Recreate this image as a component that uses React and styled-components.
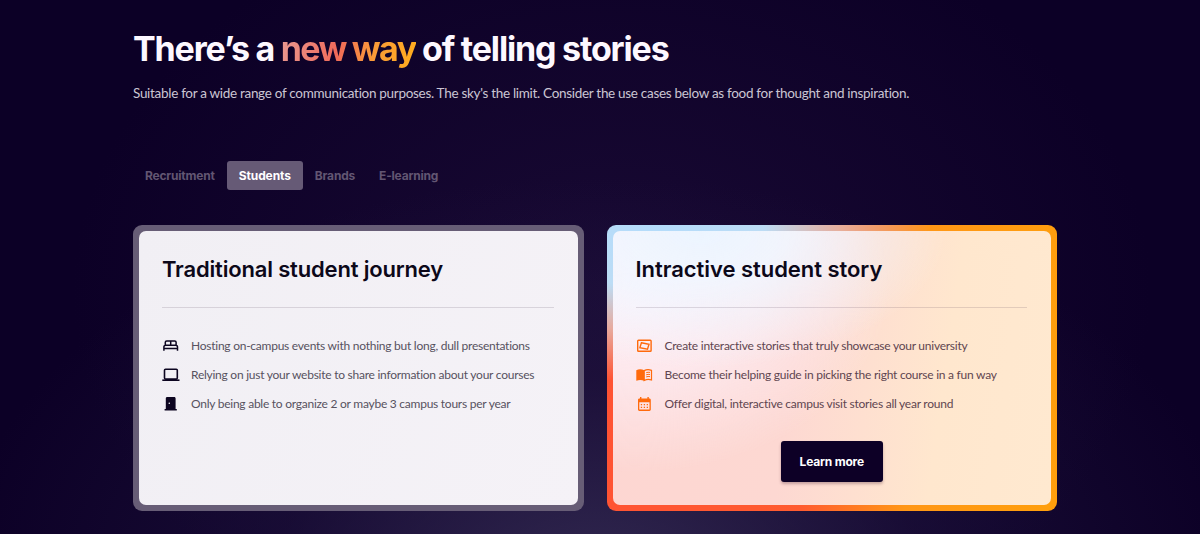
import { useState } from 'react';
import styled, { createGlobalStyle } from 'styled-components';

const tabs = ['Recruitment', 'Students', 'Brands', 'E-learning'];

const BedIcon = () => (
  <svg width="18" height="18" viewBox="0 0 18 18" fill="none" stroke="currentColor" strokeWidth="1.5">
    <path d="M3.3 8.5V5.3c0-.8.6-1.4 1.4-1.4h8c.8 0 1.4.6 1.4 1.4v3.2M8.7 4v4.3M1.9 13.7v-3.6c0-1 .8-1.8 1.8-1.8h10c1 0 1.8.8 1.8 1.8v3.6M2 11.6h13.4" />
  </svg>
);

const LaptopIcon = () => (
  <svg width="18" height="18" viewBox="0 0 18 18" fill="none" stroke="currentColor" strokeWidth="1.6">
    <rect x="2.5" y="3.3" width="12.8" height="9.8" rx="1" />
    <path d="M.3 14.2h17.2" />
  </svg>
);

const DoorIcon = () => (
  <svg width="18" height="18" viewBox="0 0 18 18" fill="currentColor">
    <path fillRule="evenodd" d="M5.2 2h7c.8 0 1.4.6 1.4 1.4v10.7h1.2v1.4H2.6v-1.4h1.2V3.4C3.800 2.600 4.400 2 5.200 2zm1.3 6.300a.8.8 0 1 0 1.600 0 .8.8 0 0 0-1.600 0z" />
  </svg>
);

const PhotosIcon = () => (
  <svg width="18" height="18" viewBox="0 0 18 18" fill="none" stroke="currentColor" strokeWidth="1.4">
    <rect x="1.7" y="3.3" width="13.4" height="11" rx=".8" />
    <path d="M5.4 5.7l7.600 1.500-1.500 4.900-7.600-1.500z" />
  </svg>
);

const BookIcon = () => (
  <svg width="18" height="18" viewBox="0 0 18 18">
    <path d="M.3 4.2C2.8 2.9 5.8 3 8.2 4.3v10.5C5.8 13.7 3 13.6.3 14.7z" fill="currentColor" />
    <path d="M8.2 4.6c2.3-1.1 4.8-1.2 7.3-.2v9.6c-2.5-.9-5-.7-7.3.5z" fill="none" stroke="currentColor" strokeWidth="1.2" />
    <path d="M10.2 6.7c1.3-.5 2.5-.6 3.8-.3M10.2 8.8c1.3-.5 2.5-.6 3.8-.3M10.2 10.9c1.3-.5 2.5-.6 3.8-.3" fill="none" stroke="currentColor" />
  </svg>
);

const CalendarIcon = () => (
  <svg width="18" height="18" viewBox="0 0 18 18" fill="currentColor">
    <path fillRule="evenodd" d="M4 2h1.4v1.5h6V2h1.4v1.5h.6c.8 0 1.4.6 1.4 1.4v9.6c0 .8-.6 1.4-1.4 1.4H3.4c-.8 0-1.4-.6-1.4-1.4V4.9c0-.8.6-1.4 1.4-1.4H4zM3.3 7.2v7.4h10.2V7.2z" />
    <path d="M4.8 9h1.3v1.2H4.8zM7.75 9h1.3v1.2h-1.3zM10.7 9H12v1.2h-1.3zM4.8 11.8h1.3V13H4.8zM7.75 11.8h1.3V13h-1.3zM10.7 11.8H12V13h-1.3z" />
  </svg>
);

const traditional = [
  { icon: <BedIcon />, text: 'Hosting on-campus events with nothing but long, dull presentations' },
  { icon: <LaptopIcon />, text: 'Relying on just your website to share information about your courses' },
  { icon: <DoorIcon />, text: 'Only being able to organize 2 or maybe 3 campus tours per year' },
];

const interactive = [
  { icon: <PhotosIcon />, text: 'Create interactive stories that truly showcase your university' },
  { icon: <BookIcon />, text: 'Become their helping guide in picking the right course in a fun way' },
  { icon: <CalendarIcon />, text: 'Offer digital, interactive campus visit stories all year round' },
];

const App = () => {
  const [active, setActive] = useState('Students');

  return (
    <Page>
      <GlobalStyle />
      <Container>
        <Title>
          There’s a <Highlight>new way</Highlight> of telling stories
        </Title>
        <Intro>
          Suitable for a wide range of communication purposes. The sky's the limit. Consider the use cases below as food for thought and inspiration.
        </Intro>
        <Tabs>
          {tabs.map((tab) => (
            <Tab key={tab} $active={tab === active} onClick={() => setActive(tab)}>
              {tab}
            </Tab>
          ))}
        </Tabs>
        <Cards>
          <Card>
            <CardBody>
              <CardTitle $spacing="-0.17px">Traditional student journey</CardTitle>
              <List>
                {traditional.map(({ icon, text }) => (
                  <Item key={text}>{icon}<ItemText>{text}</ItemText></Item>
                ))}
              </List>
            </CardBody>
          </Card>
          <Card $colorful>
            <CardBody $colorful>
              <CardTitle $spacing="-0.04px">Intractive student story</CardTitle>
              <List $colorful>
                {interactive.map(({ icon, text }) => (
                  <Item key={text} $colorful>{icon}<ItemText>{text}</ItemText></Item>
                ))}
              </List>
              <Button>Learn more</Button>
            </CardBody>
          </Card>
        </Cards>
      </Container>
    </Page>
  );
}

const GlobalStyle = createGlobalStyle`
  * {
    box-sizing: border-box;
  }
  body {
    margin: 0;
    background: #0c0028;
  }
`;
const Page = styled.main`
  height: 534px;
  overflow: hidden;
  font-family: Lato, sans-serif;
  background:
    radial-gradient(ellipse 640px 400px at 50% 108%, rgba(56, 48, 88, 0.8), rgba(36, 25, 68, 0.45) 50%, transparent),
    radial-gradient(ellipse 540px 400px at 51% 55%, #190a34, transparent),
    #0c0026;
`;
const Container = styled.div`
  width: 924px;
  margin-left: 133px;
  padding-top: 26px;
`;
const Title = styled.h1`
  margin: 0;
  height: 44px;
  font-family: Inter, sans-serif;
  font-size: 34px;
  line-height: 45px;
  font-weight: 700;
  letter-spacing: -1.15px;
  word-spacing: -0.3px;
  white-space: nowrap;
  color: #fdf8ff;
`;
const Highlight = styled.span`
  letter-spacing: -1.6px;
  background: linear-gradient(100deg, #e99a92 0%, #ef6a5a 42%, #fa9b38 68%, #ffad1c 100%);
  background-clip: text;
  -webkit-background-clip: text;
  color: transparent;
`;
const Intro = styled.p`
  margin: 13px 0 0;
  font-size: 13.5px;
  line-height: 20px;
  letter-spacing: -0.3px;
  white-space: nowrap;
  color: #cbc5d3;
`;
const Tabs = styled.nav`
  display: flex;
  margin-top: 58px;
`;
const Tab = styled.button`
  height: 29px;
  padding: 0 12px;
  border: 0;
  border-radius: 3px;
  background: ${({ $active }) => ($active ? '#665a76' : 'transparent')};
  color: ${({ $active }) => ($active ? '#fff' : '#625672')};
  font-family: Inter, sans-serif;
  font-size: 12px;
  font-weight: 700;
  letter-spacing: ${({ $active }) => ($active ? '-0.1px' : '-0.2px')};
  cursor: pointer;
`;
const Cards = styled.section`
  display: grid;
  grid-template-columns: 1fr 1fr;
  gap: 23px;
  margin-top: 35px;
`;
const Card = styled.article`
  height: 286px;
  padding: 6px;
  border-radius: 9px;
  background: ${({ $colorful }) => ($colorful
    ? `radial-gradient(ellipse 62% 55% at 10% 0%, #b4dcfb 0%, #bcdcf5 40%, rgba(222, 205, 200, 0.7) 68%, rgba(255, 160, 60, 0) 100%),
       linear-gradient(95deg, #ff5233 0%, #ff5c30 46%, #ff9716 68%, #ff9f0c 100%)`
    : '#675d76')};
`;
const CardBody = styled.div`
  display: flex;
  flex-direction: column;
  height: 100%;
  padding: 23px 24px;
  border-radius: 7px;
  background: ${({ $colorful }) => ($colorful
    ? `radial-gradient(ellipse 56% 50% at 20% 0%, #ecf5ff 0%, rgba(240, 246, 255, 0.9) 35%, rgba(248, 242, 240, 0) 100%),
       radial-gradient(ellipse 58% 68% at 5% 20%, #fdf3fb 0%, rgba(253, 236, 243, 0.75) 50%, rgba(253, 225, 225, 0) 100%),
       linear-gradient(98deg, #fdd6d2 0%, #fdd8d2 42%, #ffe7ce 74%, #ffe9d0 100%)`
    : 'linear-gradient(110deg, #f1eff4, #f5f2f7)')};
`;
const CardTitle = styled.h2`
  margin: 0 0 0 -1px;
  height: 54px;
  border-bottom: 1px solid rgba(60, 40, 70, 0.15);
  font-family: Inter, sans-serif;
  font-size: 22px;
  line-height: 30px;
  font-weight: 600;
  letter-spacing: ${({ $spacing }) => $spacing};
  white-space: nowrap;
  color: #0c0819;
`;
const List = styled.ul`
  display: flex;
  flex-direction: column;
  gap: 9px;
  margin: 28px 0 0;
  padding: 0;
  list-style: none;
  color: ${({ $colorful }) => ($colorful ? '#5f4650' : '#57525f')};
`;
const Item = styled.li`
  display: flex;
  align-items: center;
  gap: 11px;
  height: 20px;
  font-size: 12px;
  letter-spacing: -0.25px;
  white-space: nowrap;

  svg {
    flex: none;
    margin-left: -1px;
    color: ${({ $colorful }) => ($colorful ? '#ff6a0c' : '#0c0520')};
  }
`;
const ItemText = styled.span`
  padding-bottom: 2px;
`;
const Button = styled.button`
  align-self: center;
  width: 102px;
  height: 41px;
  margin-top: 27px;
  padding: 0;
  border: 0;
  border-radius: 3px;
  background: #0d0026;
  box-shadow: 0 2px 3px rgba(60, 20, 40, 0.3);
  font-family: Inter, sans-serif;
  font-size: 12px;
  font-weight: 700;
  letter-spacing: -0.2px;
  color: #fff;
  cursor: pointer;
`;

export default App;
